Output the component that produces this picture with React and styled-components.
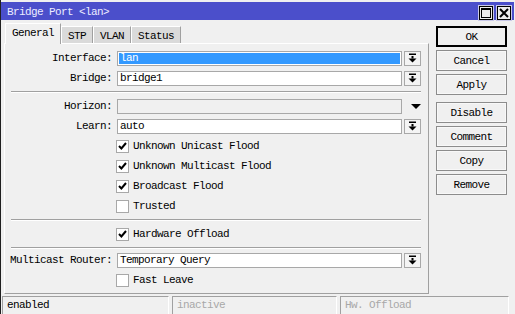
import React from "react";
import styled, { createGlobalStyle } from "styled-components";

const GlobalStyle = createGlobalStyle`
  body {
    margin: 0;
    background: #f0f0f0;
    font-family: "Liberation Mono", "DejaVu Sans Mono", monospace;
    font-size: 11px;
    letter-spacing: -0.6px;
  }
`;

const DropIcon = () => (
  <svg width="9" height="10" viewBox="0 0 9 10">
    <rect x="1" y="0.5" width="7" height="1.5" fill="#000" />
    <rect x="3.5" y="3" width="2" height="2.5" fill="#000" />
    <path d="M0.5 5.5 L8.5 5.5 L4.5 9.5 Z" fill="#000" />
  </svg>
);

const Check = () => (
  <svg width="9" height="8" viewBox="0 0 9 8">
    <path d="M1 4 L3.4 6.5 L8 1" stroke="#000" strokeWidth="2" fill="none" />
  </svg>
);

const tabs = ["General", "STP", "VLAN", "Status"];
const sideButtons = [
  { label: "OK", primary: true },
  { label: "Cancel" },
  { label: "Apply", gapAfter: true },
  { label: "Disable" },
  { label: "Comment" },
  { label: "Copy" },
  { label: "Remove" },
];

const Field = ({ label, value, selected, disabled, button = true, triangle }) => (
  <Row>
    <Label>{label}</Label>
    <Input $selected={selected} $disabled={disabled}>
      {value}
    </Input>
    <Slot>
      {button && (
        <DropButton>
          <DropIcon />
        </DropButton>
      )}
      {triangle && <Triangle />}
    </Slot>
  </Row>
);

const CheckRow = ({ label, checked }) => (
  <CheckLine>
    <Box>{checked && <Check />}</Box>
    <span>{label}</span>
  </CheckLine>
);

export default function App() {
  return (
    <>
      <GlobalStyle />
      <Window>
        <TitleBar>
          <Title>Bridge Port &lt;lan&gt;</Title>
          <TitleButtons>
            <WinButton>
              <svg width="10" height="10" viewBox="0 0 10 10">
                <rect x="0.5" y="0.5" width="9" height="9" fill="none" stroke="#000" />
                <rect x="0" y="0" width="10" height="2" fill="#000" />
              </svg>
            </WinButton>
            <WinButton>
              <svg width="10" height="10" viewBox="0 0 10 10">
                <path d="M1 1 L9 9 M9 1 L1 9" stroke="#000" strokeWidth="2" />
              </svg>
            </WinButton>
          </TitleButtons>
        </TitleBar>
        <Body>
          <Main>
            <Tabs>
              {tabs.map((t, i) => (
                <Tab key={t} $active={i === 0}>
                  {t}
                </Tab>
              ))}
            </Tabs>
            <Panel>
              <Field label="Interface:" value="lan" selected />
              <Field label="Bridge:" value="bridge1" />
              <Separator />
              <Field label="Horizon:" value="" disabled button={false} triangle />
              <Field label="Learn:" value="auto" />
              <CheckRow label="Unknown Unicast Flood" checked />
              <CheckRow label="Unknown Multicast Flood" checked />
              <CheckRow label="Broadcast Flood" checked />
              <CheckRow label="Trusted" />
              <Separator />
              <CheckRow label="Hardware Offload" checked />
              <Separator $small />
              <Field label="Multicast Router:" value="Temporary Query" />
              <CheckRow label="Fast Leave" />
            </Panel>
          </Main>
          <Side>
            {sideButtons.map((b) => (
              <SideButton key={b.label} $primary={b.primary} $gapAfter={b.gapAfter}>
                {b.label}
              </SideButton>
            ))}
          </Side>
        </Body>
        <StatusBar>
          <StatusField $w={167}>enabled</StatusField>
          <StatusField $w={165} $dim>inactive</StatusField>
          <StatusField $w={169} $dim>Hw. Offload</StatusField>
        </StatusBar>
      </Window>
    </>
  );
}

const Window = styled.div`
  width: 514px;
  height: 314px;
  border-left: 1px solid #202020;
  background: #f0f0f0;
  display: flex;
  flex-direction: column;
  padding-top: 2px;
  box-sizing: border-box;
  overflow: hidden;
`;

const TitleBar = styled.div`
  height: 18px;
  background: #4b4fcb;
  display: flex;
  align-items: center;
  justify-content: space-between;
  padding: 0 3px 0 6px;
  flex-shrink: 0;
`;

const Title = styled.div`
  color: #ececff;
  padding-top: 1px;
`;

const TitleButtons = styled.div`
  display: flex;
  gap: 4px;
  margin-top: 3px;
`;

const WinButton = styled.div`
  width: 12px;
  height: 12px;
  border: 1px solid #000;
  background: #ececec;
  box-shadow: 0 0 0 1px #c8c8e8;
  display: flex;
  align-items: center;
  justify-content: center;
`;

const Body = styled.div`
  display: flex;
  padding-top: 2px;
`;

const Main = styled.div`
  margin-left: 3px;
  width: 425px;
  display: flex;
  flex-direction: column;
`;

const Tabs = styled.div`
  display: flex;
  align-items: flex-end;
  height: 21px;
  padding-left: 1px;
`;

const Tab = styled.div`
  height: ${(p) => (p.$active ? "21px" : "17px")};
  box-sizing: border-box;
  padding: 0 6px;
  display: flex;
  align-items: center;
  padding-top: ${(p) => (p.$active ? "0" : "1px")};
  background: ${(p) => (p.$active ? "#f0f0f0" : "#dadada")};
  border-top: 1px solid #fff;
  border-left: 1px solid #fff;
  border-right: 1px solid #a0a0a0;
  margin-bottom: ${(p) => (p.$active ? "-1px" : "0")};
  position: relative;
  z-index: ${(p) => (p.$active ? 1 : 0)};
  padding-bottom: ${(p) => (p.$active ? "2px" : "0")};
`;

const Panel = styled.div`
  height: 251px;
  box-sizing: border-box;
  border-top: 1px solid #fff;
  border-left: 1px solid #fff;
  border-right: 1px solid #a0a0a0;
  border-bottom: 1px solid #a0a0a0;
  padding-top: 4px;
  display: flex;
  flex-direction: column;
`;

const Row = styled.div`
  height: 20px;
  display: flex;
  align-items: center;
`;

const Label = styled.div`
  width: 107px;
  text-align: right;
  margin-right: 5px;
  color: #000;
`;

const Input = styled.div`
  width: 285px;
  height: 15px;
  box-sizing: border-box;
  border: 1px solid #a8a8a8;
  padding-left: 2px;
  line-height: 13px;
  background: ${(p) => (p.$selected ? "#3399ff" : p.$disabled ? "#f0f0f0" : "#fff")};
  color: ${(p) => (p.$selected ? "#fff" : "#000")};
  box-shadow: ${(p) => (p.$selected ? "inset 0 0 0 1px #fff" : "none")};
`;

const Slot = styled.div`
  width: 17px;
  margin-left: 2px;
  display: flex;
  justify-content: center;
`;

const DropButton = styled.div`
  width: 17px;
  height: 15px;
  box-sizing: border-box;
  border: 1px solid #a8a8a8;
  background: #f4f4f4;
  display: flex;
  align-items: center;
  justify-content: center;
`;

const Triangle = styled.div`
  width: 0;
  height: 0;
  border-left: 5px solid transparent;
  border-right: 5px solid transparent;
  border-top: 5px solid #000;
  margin-left: 6px;
`;

const Separator = styled.div`
  margin: ${(p) => (p.$small ? "3px 7px 1px 6px" : "3px 7px 3px 6px")};
  height: 1px;
  border-bottom: 1px solid #fff;
  background: #a0a0a0;
  flex-shrink: 0;
`;

const CheckLine = styled.div`
  height: 20px;
  display: flex;
  align-items: center;
  padding-left: 111px;
  gap: 4px;
`;

const Box = styled.div`
  width: 13px;
  height: 13px;
  box-sizing: border-box;
  border: 1px solid #a8a8a8;
  background: #fff;
  display: flex;
  align-items: center;
  justify-content: center;
`;

const Side = styled.div`
  margin-left: 7px;
  padding-top: 4px;
  width: 71px;
  display: flex;
  flex-direction: column;
  gap: 3px;
`;

const SideButton = styled.div`
  height: 21px;
  box-sizing: border-box;
  border: ${(p) => (p.$primary ? "2px solid #000" : "1px solid #8c8c8c")};
  box-shadow: ${(p) => (p.$primary ? "none" : "inset 0 0 0 1px #f8f8f8")};
  background: #f0f0f0;
  display: flex;
  align-items: center;
  justify-content: center;
  color: #000;
  margin-bottom: ${(p) => (p.$gapAfter ? "4px" : "0")};
`;

const StatusBar = styled.div`
  margin-top: 2px;
  display: flex;
  gap: 3px;
  padding-left: 1px;
`;

const StatusField = styled.div`
  width: ${(p) => p.$w}px;
  height: 18px;
  box-sizing: border-box;
  border-top: 1px solid #a0a0a0;
  border-left: 1px solid #a0a0a0;
  border-right: 1px solid #fff;
  padding-left: 4px;
  line-height: 17px;
  color: ${(p) => (p.$dim ? "#a8a8a8" : "#000")};
`;
